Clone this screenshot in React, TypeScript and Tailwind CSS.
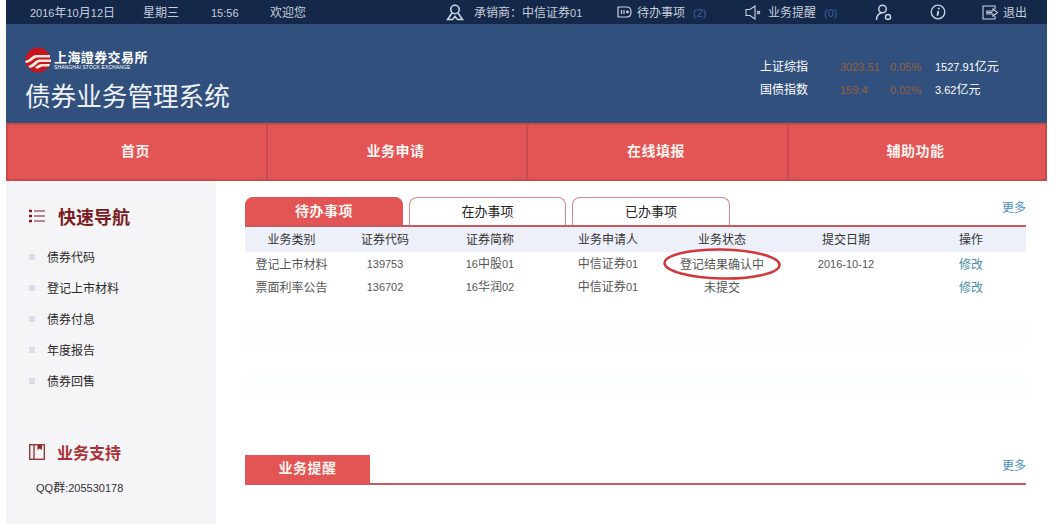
import type { ReactNode } from "react";

// digits are narrower than the CJK text around them, so they get their own span
function Mixed({ text, className = "text-[11px]" }: { text: string; className?: string }) {
  return (
    <>
      {text.split(/([0-9A-Za-z.:\-%()]+)/).map((part, i) =>
        /^[0-9A-Za-z.:\-%()]+$/.test(part) ? (
          <span key={i} className={`font-['Liberation_Sans',sans-serif] ${className}`}>
            {part}
          </span>
        ) : (
          <span key={i}>{part}</span>
        )
      )}
    </>
  );
}

function Logo() {
  return (
    <svg width="26" height="26" viewBox="0 0 26 26">
      <circle cx="13" cy="13" r="12.5" fill="#c4161c" />
      <path d="M0 14 C5 13 7 8 11 8 L25 8 L25 10.5 L12.5 10.5 C9 10.5 7 15 1 16 Z" fill="#f6e7dc" />
      <path d="M3 19 C8 18 10 12.5 14 12.5 L26 12.5 L26 15 L15.5 15 C12 15 10 20 5 21 Z" fill="#f6e7dc" />
      <path d="M10 20 C12 19 14 17 17 17 L25 17 L24 19.5 L18 19.5 C16 19.5 14 21 12 22 Z" fill="#f6e7dc" />
    </svg>
  );
}

const iconCls = "text-[#c9d3e2] shrink-0";

function PersonIcon() {
  return (
    <svg width="18" height="17" viewBox="0 0 18 17" fill="none" stroke="currentColor" strokeWidth="1.6" className={iconCls}>
      <circle cx="9" cy="5.5" r="4.2" />
      <path d="M6 9 L1.5 15.5 H6.5 L9 12.5 L11.5 15.5 H16.5 L12 9" />
    </svg>
  );
}

function TodoIcon() {
  return (
    <svg width="15" height="12" viewBox="0 0 15 12" fill="none" stroke="currentColor" strokeWidth="1.2" className={iconCls}>
      <path d="M1 1 H10 C13 1 14 3.5 14 6 C14 8.5 13 11 10 11 H1 Z" />
      <path d="M4.5 4 V8 M7 4 V8" />
      <circle cx="10.5" cy="6" r="0.8" fill="currentColor" />
    </svg>
  );
}

function SpeakerIcon() {
  return (
    <svg width="16" height="15" viewBox="0 0 16 15" fill="none" stroke="currentColor" strokeWidth="1.1" className={iconCls}>
      <path d="M1 4.5 H5 L10 1 V14 L5 10.5 H1 Z" />
      <path d="M12 6 L15 9 M15 6 L12 9" />
    </svg>
  );
}

function UserIcon() {
  return (
    <svg width="17" height="17" viewBox="0 0 17 17" fill="none" stroke="currentColor" strokeWidth="1.5" className={iconCls}>
      <circle cx="7.5" cy="5" r="3.8" />
      <path d="M1.5 16 C1.5 12 3.5 9.5 6.5 9" />
      <circle cx="13" cy="13" r="2.5" />
    </svg>
  );
}

function InfoIcon() {
  return (
    <svg width="16" height="16" viewBox="0 0 16 16" fill="none" stroke="currentColor" strokeWidth="1.3" className={iconCls}>
      <circle cx="8" cy="8" r="6.8" />
      <path d="M8.4 7 L7.4 11.8" strokeWidth="1.8" />
      <circle cx="8.8" cy="4.5" r="1" fill="currentColor" stroke="none" />
    </svg>
  );
}

function LogoutIcon() {
  return (
    <svg width="18" height="15" viewBox="0 0 18 15" fill="none" stroke="currentColor" strokeWidth="1.1" className={iconCls}>
      <path d="M13 4 V1 H1 V14 H13 V11" />
      <path d="M4 6 H11 V3.8 L15.5 7.5 L11 11.2 V9 H4 M4 7.5 H10" />
    </svg>
  );
}

function TopItem({ icon, children, className = "" }: { icon?: ReactNode; children?: ReactNode; className?: string }) {
  return (
    <div className={`flex items-center ${className}`}>
      {icon}
      {children}
    </div>
  );
}

const rows = [
  ["登记上市材料", "139753", "16中股01", "中信证券01", "登记结果确认中", "2016-10-12"],
  ["票面利率公告", "136702", "16华润02", "中信证券01", "未提交", ""],
];

const gridCols = "grid grid-cols-[93px_94px_116px_120px_108px_140px_110px]";

function TopBar() {
  return (
    <div className="flex h-6 items-center bg-[#14284a] pl-6 text-xs text-[#c5cedb]">
      <span className="w-[113px]"><Mixed text="2016年10月12日" /></span>
      <span className="w-[68px]">星期三</span>
      <span className="w-[59px]"><Mixed text="15:56" /></span>
      <span className="w-[176px]">欢迎您</span>
      <TopItem icon={<PersonIcon />} className="w-[171px]">
        <span className="ml-[10px]">承销商：<Mixed text="中信证券01" /></span>
      </TopItem>
      <TopItem icon={<TodoIcon />} className="w-[128px]">
        <span className="ml-[5px]">待办事项</span>
        <span className="ml-2 text-[#3f5f9f]"><Mixed text="(2)" /></span>
      </TopItem>
      <TopItem icon={<SpeakerIcon />} className="w-[130px]">
        <span className="ml-[7px]">业务提醒</span>
        <span className="ml-2 text-[#3f5f9f]"><Mixed text="(0)" /></span>
      </TopItem>
      <TopItem icon={<UserIcon />} className="w-[55px]" />
      <TopItem icon={<InfoIcon />} className="w-[52px]" />
      <TopItem icon={<LogoutIcon />}>
        <span className="ml-[3px]">退出</span>
      </TopItem>
    </div>
  );
}

function Banner() {
  return (
    <div className="flex h-[99px] justify-between bg-[#31507d] pl-[19px]">
      <div className="pt-[23px]">
        <div className="flex items-center">
          <Logo />
          <div className="ml-[3px] text-white">
            <div className="text-[13px] font-bold leading-[15px] tracking-[0.4px] font-['Noto_Sans_CJK_TC',sans-serif]">上海證券交易所</div>
            <div className="font-['Liberation_Sans',sans-serif] text-[5px] leading-[7px] tracking-[0.1px]">SHANGHAI STOCK EXCHANGE</div>
          </div>
        </div>
        <div className="mt-[7px] text-[25.6px] leading-[30px] text-[#eef2f7]">债券业务管理系统</div>
      </div>
      <div className="mr-[47px] mt-[34px] flex flex-col gap-[7px] text-xs text-white">
        <div className="flex h-4 items-center">
          <span className="w-20">上证综指</span>
          <span className="w-[50px] text-[#96603f]"><Mixed text="3023.51" /></span>
          <span className="w-[45px] text-[#96603f]"><Mixed text="0.05%" /></span>
          <span className="w-[65px]"><Mixed text="1527.91亿元" /></span>
        </div>
        <div className="flex h-4 items-center">
          <span className="w-20">国债指数</span>
          <span className="w-[50px] text-[#96603f]"><Mixed text="159.4" /></span>
          <span className="w-[45px] text-[#96603f]"><Mixed text="0.02%" /></span>
          <span className="w-[65px]"><Mixed text="3.62亿元" /></span>
        </div>
      </div>
    </div>
  );
}

function NavBar() {
  return (
    <div className="grid h-[58px] grid-cols-[260px_260px_261px_256px] border-y-2 border-[#c94a4d] bg-[#c94a4d] px-0.5">
      {["首页", "业务申请", "在线填报", "辅助功能"].map((label) => (
        <div
          key={label}
          className="flex items-center justify-center rounded-[2px] border-r-2 border-[#c94a4d] bg-[#e35454] pb-1 pr-[3px] text-sm font-bold tracking-[0.5px] text-[#fff3ef] last:border-r-0"
        >
          {label}
        </div>
      ))}
    </div>
  );
}

function Sidebar() {
  return (
    <aside className="h-[343px] w-[210px] bg-[#f5f4f6] pl-[23px] pt-6">
      <div className="flex h-[22px] items-center">
        <svg width="16" height="14" viewBox="0 0 16 14" stroke="#7a1c20" fill="none">
          <path d="M5 2 H16 M5 7 H16 M5 12 H16" strokeWidth="1.2" />
          <path d="M0 2 H3 M0 7 H3 M0 12 H3" strokeWidth="2.4" />
        </svg>
        <span className="ml-[13px] text-lg font-bold leading-[22px] text-[#7a1c20]">快速导航</span>
      </div>
      <ul className="mt-[22px] flex flex-col gap-[15px] text-xs leading-4 text-[#2a2a2a]">
        {["债券代码", "登记上市材料", "债券付息", "年度报告", "债券回售"].map((item) => (
          <li key={item} className="flex items-center">
            <span className="size-[6px] bg-[#dcdce8]" />
            <span className="ml-3">{item}</span>
          </li>
        ))}
      </ul>
      <div className="mt-[53px] flex h-5 items-center">
        <svg width="16" height="16" viewBox="0 0 16 16" fill="none" stroke="#8d2a2e" strokeWidth="1.3">
          <rect x="0.7" y="0.7" width="14.6" height="14.6" />
          <path d="M5 1 V15" />
          <path d="M8.5 1 H13 V6 L10.7 4.5 L8.5 6 Z" fill="#8d2a2e" stroke="none" />
        </svg>
        <span className="ml-[12px] text-base font-bold text-[#a83238]">业务支持</span>
      </div>
      <div className="ml-[7px] mt-[17px] text-xs leading-4 text-[#333]">
        <Mixed text="QQ群:205530178" />
      </div>
    </aside>
  );
}

function TodoPanel() {
  return (
    <section>
      <div className="flex h-[30px] items-end justify-between border-b-2 border-[#c9595e]">
        <div className="flex gap-[6px]">
          <div className="flex h-7 w-[158px] items-center justify-center rounded-t-lg bg-[#e35454] pb-0.5 text-sm font-bold tracking-[0.5px] text-[#fff3ef]">
            待办事项
          </div>
          {["在办事项", "已办事项"].map((tab) => (
            <div
              key={tab}
              className="flex h-7 w-[157px] items-center justify-center rounded-t-lg border border-b-0 border-[#d98a8e] pb-0.5 text-[13px] text-[#222] last:w-[158px]"
            >
              {tab}
            </div>
          ))}
        </div>
        <span className="mb-[10px] text-xs leading-4 text-[#4a8fc0]">更多</span>
      </div>
      <div className={`${gridCols} h-[25px] items-center bg-[#eef0f9] pb-px text-center text-xs text-[#333]`}>
        {["业务类别", "证券代码", "证券简称", "业务申请人", "业务状态", "提交日期", "操作"].map((h) => (
          <span key={h}>{h}</span>
        ))}
      </div>
      {rows.map((row) => (
        <div key={row[0]} className={`${gridCols} h-[23px] items-center text-center text-xs text-[#555]`}>
          {row.map((cell, i) => (
            <span key={i} className="relative">
              <Mixed text={cell} />
              {cell === "登记结果确认中" && (
                <svg width="120" height="36" viewBox="0 0 120 36" fill="none" className="absolute left-[-6px] top-[-10px]">
                  <ellipse cx="60" cy="18" rx="57.5" ry="14.5" stroke="#d2373c" strokeWidth="2.6" transform="rotate(1 60 18)" />
                </svg>
              )}
            </span>
          ))}
          <span className="text-[#4a8fa8]">修改</span>
        </div>
      ))}
      {/* the empty rows are only just off white */}
      <div className="mt-[21px] h-[30px] bg-[#fcfeff]" />
      <div className="mt-[25px] h-[25px] bg-[#fcfeff]" />
    </section>
  );
}

function RemindPanel() {
  return (
    <section className="mt-14 flex h-[30px] justify-between border-b-2 border-[#c9595e]">
      <div className="flex h-[29px] w-[125px] items-center justify-center bg-[#e35454] pb-1.5 text-sm font-bold tracking-[0.5px] text-[#fff3ef]">
        业务提醒
      </div>
      <span className="mt-[2px] text-xs leading-4 text-[#4a8fc0]">更多</span>
    </section>
  );
}

export default function App() {
  return (
    <div className="h-[524px] w-[1064px] overflow-hidden bg-white pl-[6px] font-['Noto_Sans_CJK_SC',sans-serif]">
      <div className="w-[1041px]">
        <TopBar />
        <Banner />
        <NavBar />
        <div className="flex">
          <Sidebar />
          <main className="ml-[29px] mt-[16px] w-[781px]">
            <TodoPanel />
            <RemindPanel />
          </main>
        </div>
      </div>
    </div>
  );
}
